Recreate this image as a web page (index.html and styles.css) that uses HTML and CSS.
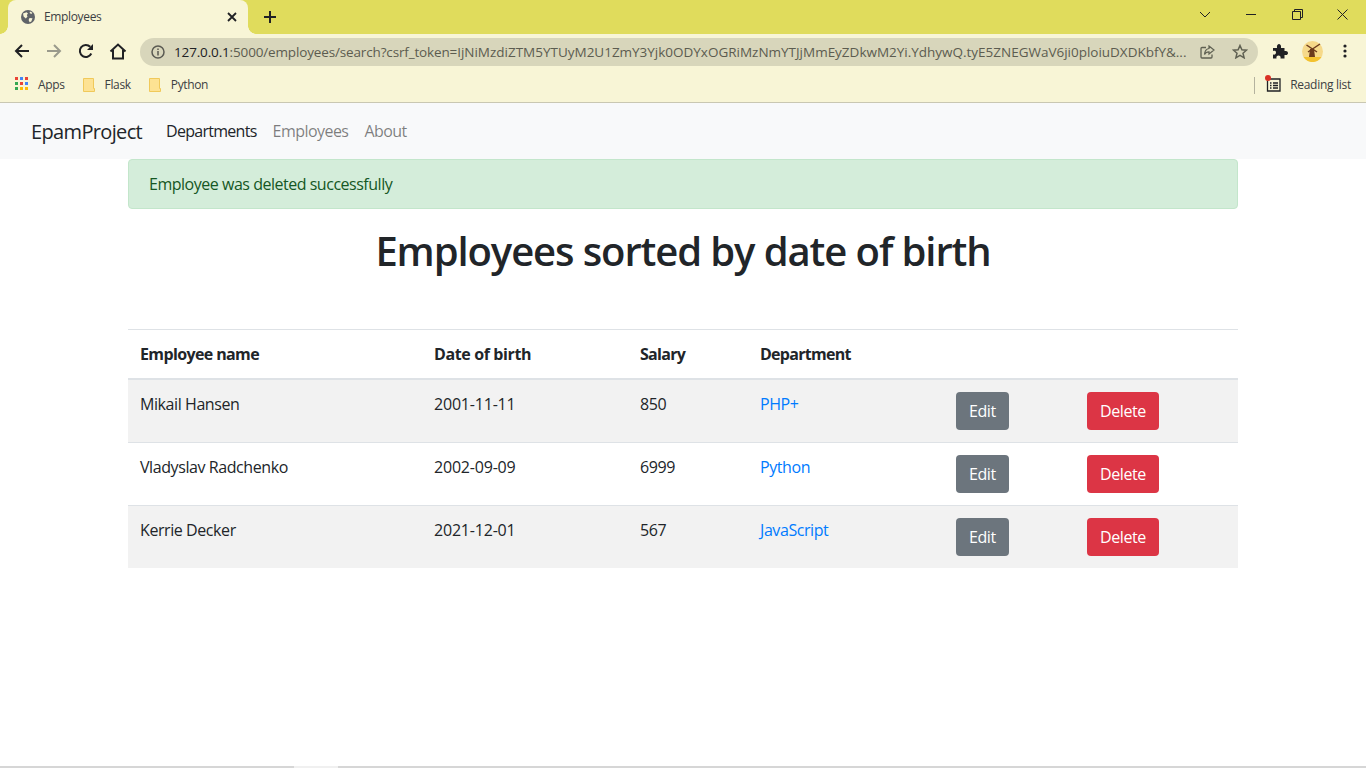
FILE: index.html
```html
<!DOCTYPE html>
<html lang="en">
<head>
<meta charset="utf-8">
<title>Employees</title>
<link rel="stylesheet" href="styles.css">
</head>
<body>
<div class="shell">
  <header class="browser">
    <div class="tabstrip">
      <div class="tab">
        <svg class="tab-globe" width="16" height="16" viewBox="0 0 16 16"><circle cx="8" cy="8" r="7" fill="#5f6368"/><path d="M3 4.500 6.500 3.200 8 4.500 6.800 6 7.500 7.500 5.800 9.500 3.600 7.500ZM9.500 9 12.500 9.200 11.300 12.600 9.600 13.300 8.600 11ZM10 2.500 12.500 3.800 11.300 5 9.600 4Z" fill="#f8f5d6"/></svg>
        <span class="tab-title">Employees</span>
        <svg class="tab-close" width="10" height="10" viewBox="0 0 10 10"><path d="M1 1 9 9M9 1 1 9" stroke="#202124" stroke-width="1.800" fill="none"/></svg>
      </div>
      <svg class="new-tab" width="12" height="12" viewBox="0 0 12 12"><path d="M6 0V12M0 6H12" stroke="#202124" stroke-width="2" fill="none"/></svg>
      <div class="window-controls">
        <svg class="ctl-chevron" width="12" height="7" viewBox="0 0 12 7"><path d="M1 1 6 6 11 1" stroke="#202124" fill="none"/></svg>
        <svg class="ctl-min" width="10" height="1" viewBox="0 0 10 1"><path d="M0 .5H10" stroke="#202124"/></svg>
        <svg class="ctl-max" width="11" height="11" viewBox="0 0 11 11"><path d="M.5 2.500H8.500V10.500H.5ZM2.500 2.500V.5H10.500V8.500H8.500" stroke="#202124" fill="none"/></svg>
        <svg class="ctl-close" width="11" height="11" viewBox="0 0 11 11"><path d="M.5 .5 10.500 10.500M10.500 .5 .5 10.500" stroke="#202124" fill="none"/></svg>
      </div>
    </div>
    <div class="toolbar">
      <svg class="nav-icon" width="16" height="16" viewBox="0 0 16 16"><path d="M15 8H2M8 2 2 8 8 14" stroke="#202124" stroke-width="2" fill="none"/></svg>
      <svg class="nav-icon nav-forward" width="16" height="16" viewBox="0 0 16 16"><path d="M1 8H14M8 2 14 8 8 14" stroke="#9a9a8c" stroke-width="2" fill="none"/></svg>
      <svg class="nav-icon nav-reload" width="16" height="16" viewBox="0 0 16 16"><path d="M13.300 10.500A6 6 0 1 1 12.200 3.800" stroke="#202124" stroke-width="2" fill="none"/><path d="M15 1V7H9Z" fill="#202124"/></svg>
      <svg class="nav-icon nav-home" width="18" height="17" viewBox="0 0 18 17"><path d="M1.500 8.500 9 1.500 16.500 8.500M4 7V15.500H14V7" stroke="#202124" stroke-width="2" fill="none"/></svg>
      <div class="omnibox">
        <svg class="info" width="14" height="14" viewBox="0 0 14 14"><circle cx="7" cy="7" r="6" stroke="#5a5a52" stroke-width="1.500" fill="none"/><path d="M7 6V10.500M7 3.500V5" stroke="#5a5a52" stroke-width="1.500"/></svg>
        <div class="url"><span class="url-host">127.0.0.1</span>:5000/employees/search?csrf_token=<span class="url-token">IjNiMzdiZTM5YTUyM2U1ZmY3Yjk0ODYxOGRiMzNmYTJjMmEyZDkwM2Yi.YdhywQ.tyE5ZNEGWaV6ji0ploiuDXDKbfY&amp;...</span></div>
        <svg class="omni-share" width="15" height="14" viewBox="0 0 15 14"><path d="M6 2.500H2A1 1 0 0 0 1 3.500V12A1 1 0 0 0 2 13H11A1 1 0 0 0 12 12V9.500" stroke="#5f6052" stroke-width="1.300" fill="none"/><path d="M9 1 14 5 9 9V6.800C7 6.800 5.500 7.500 4.500 9.500 4.700 6.500 6.500 4 9 3.500Z" stroke="#5f6052" stroke-width="1.200" fill="none"/></svg>
        <svg class="omni-star" width="16" height="15" viewBox="0 0 16 15"><path d="M8 1.500 9.900 5.800 14.500 6.200 11 9.300 12.100 13.800 8 11.400 3.900 13.800 5 9.300 1.500 6.200 6.100 5.800Z" stroke="#5f6052" stroke-width="1.500" fill="none"/></svg>
      </div>
      <svg class="puzzle" width="16" height="16" viewBox="0 0 16 16"><path d="M1 5H5C4.500 2 6 1 7 1S9.500 2 9 5H12.500V8C15.500 7.500 16 9 16 10S15.500 12.500 12.500 12V15.500H8.500C9 13.500 8 12.500 6.500 12.500S4 13.500 4.500 15.500H1V11.500C3 12 4 11 4 9.500S3 7.500 1 8Z" fill="#202124"/></svg>
      <svg class="avatar" width="21" height="21" viewBox="0 0 21 21"><circle cx="10.500" cy="10.500" r="10.500" fill="#f6d98a"/><path d="M1.500 16A10.500 10.500 0 0 0 19.500 16Z" fill="#f3c22f"/><path d="M8 8H12L13 16H7Z" fill="#6b3a1c"/><path d="M4.500 4 15 11M18 3 6 11" stroke="#6b3a1c" stroke-width="1.500"/></svg>
      <svg class="kebab" width="4" height="14" viewBox="0 0 4 14"><circle cx="2" cy="2" r="1.600" fill="#202124"/><circle cx="2" cy="7" r="1.600" fill="#202124"/><circle cx="2" cy="12" r="1.600" fill="#202124"/></svg>
    </div>
    <div class="bookmarks">
      <svg class="apps" width="14" height="14" viewBox="0 0 14 14">
        <rect width="3" height="3" fill="#ea4335"/><rect x="5" width="3" height="3" fill="#4285f4"/><rect x="10" width="3" height="3" fill="#ea4335"/>
        <rect y="5" width="3" height="3" fill="#34a853"/><rect x="5" y="5" width="3" height="3" fill="#ea4335"/><rect x="10" y="5" width="3" height="3" fill="#4285f4"/>
        <rect y="10" width="3" height="3" fill="#34a853"/><rect x="5" y="10" width="3" height="3" fill="#fbbc04"/><rect x="10" y="10" width="3" height="3" fill="#fbbc04"/>
      </svg>
      <span class="bm-label bm-apps">Apps</span>
      <svg class="folder" width="12" height="14" viewBox="0 0 12 14"><path d="M.5 .5H10.500V10.500H11.500V13.500H.5Z" fill="#fde293" stroke="#f0c95a"/></svg>
      <span class="bm-label bm-flask">Flask</span>
      <svg class="folder" width="12" height="14" viewBox="0 0 12 14"><path d="M.5 .5H10.500V10.500H11.500V13.500H.5Z" fill="#fde293" stroke="#f0c95a"/></svg>
      <span class="bm-label">Python</span>
      <div class="reading">
        <span class="reading-sep"></span>
        <span class="reading-icon">
          <svg width="15" height="14" viewBox="0 0 15 14"><path d="M1.500 2.500V13H14V1H1.500M4 5H5.500M7 5H12M4 7.500H5.500M7 7.500H12M4 10H5.500M7 10H12" stroke="#202124" stroke-width="1.300" fill="none"/></svg>
          <span class="reading-dot"></span>
        </span>
        <span class="bm-label bm-reading">Reading list</span>
      </div>
    </div>
  </header>
  <nav class="navbar">
    <a class="brand">EpamProject</a>
    <a class="nav-link nav-active">Departments</a>
    <a class="nav-link">Employees</a>
    <a class="nav-link">About</a>
  </nav>
  <main class="container">
    <div class="alert">Employee was deleted successfully</div>
    <h1 class="title">Employees sorted by date of birth</h1>
    <table class="table">
      <colgroup>
        <col class="c-name"><col class="c-dob"><col class="c-sal"><col class="c-dep"><col class="c-edit"><col class="c-del">
      </colgroup>
      <thead>
        <tr><th class="th-name">Employee name</th><th class="th-dob">Date of birth</th><th class="th-sal">Salary</th><th class="th-dep">Department</th><th></th><th></th></tr>
      </thead>
      <tbody>
        <tr class="striped"><td>Mikail Hansen</td><td class="date">2001-11-11</td><td>850</td><td><a class="link">PHP+</a></td><td><a class="btn btn-edit">Edit</a></td><td><a class="btn btn-del">Delete</a></td></tr>
        <tr><td>Vladyslav Radchenko</td><td class="date">2002-09-09</td><td>6999</td><td><a class="link">Python</a></td><td><a class="btn btn-edit">Edit</a></td><td><a class="btn btn-del">Delete</a></td></tr>
        <tr class="striped"><td>Kerrie Decker</td><td class="date">2021-12-01</td><td>567</td><td><a class="link">JavaScript</a></td><td><a class="btn btn-edit">Edit</a></td><td><a class="btn btn-del">Delete</a></td></tr>
      </tbody>
    </table>
  </main>
  <div class="scrollbar"><span class="scroll-thumb"></span></div>
</div>
</body>
</html>
```
FILE: styles.css
```css
* { box-sizing: border-box; }
html, body { margin: 0; padding: 0; height: 100%; overflow: hidden; background: #fff; }
body { font-family: "Open Sans", "Noto Sans", "Liberation Sans", sans-serif; color: #212529; }
svg { display: block; flex: none; }
.shell { height: 768px; display: flex; flex-direction: column; }

/* Browser chrome */
.browser { height: 103px; flex: none; background: #f8f5d6; border-bottom: 1px solid #c9c7b2; display: flex; flex-direction: column; }
.tabstrip { height: 34px; background: #e0dc5c; display: flex; align-items: center; padding-left: 8px; }
.tab { width: 240px; height: 34px; background: #f8f5d6; border-radius: 8px 8px 0 0; display: flex; align-items: center; padding-left: 12px; position: relative; }
.tab::before, .tab::after { content: ""; position: absolute; bottom: 0; width: 8px; height: 8px; }
.tab::before { left: -8px; background: radial-gradient(circle at 0 0, #e0dc5c 7.500px, #f8f5d6 8px); }
.tab::after { right: -8px; background: radial-gradient(circle at 100% 0, #e0dc5c 7.500px, #f8f5d6 8px); }
.tab-globe { margin-top: -1px; }
.tab-title { font-size: 12px; margin-left: 8px; margin-top: -2px; letter-spacing: -.35px; color: #3c4043; flex: 1; }
.tab-close { margin-right: 11px; }
.new-tab { margin-left: 16px; }
.window-controls { margin-left: auto; display: flex; align-items: center; }
.ctl-chevron { margin-right: 35px; margin-top: -6px; }
.ctl-min { margin-right: 36px; margin-top: -6px; }
.ctl-max { margin-right: 34px; margin-top: -6px; }
.ctl-close { margin-right: 18px; margin-top: -6px; }

.toolbar { height: 34px; display: flex; align-items: center; padding-left: 14px; }
.nav-forward { margin-left: 16px; }
.nav-reload { margin-left: 16px; }
.nav-home { margin-left: 15px; }
.omnibox { width: 1118px; height: 28px; margin-left: 13px; background: #d8d6bb; border-radius: 14px; display: flex; align-items: center; padding-left: 11px; margin-top: 1px; }
.info { margin-right: 9px; }
.url { font-size: 13.500px; letter-spacing: -.15px; color: #5c5c50; width: 1018px; white-space: nowrap; overflow: hidden; }
.url-host { color: #202124; }
.url-token { letter-spacing: -.01px; }
.omni-share { margin-left: 8px; }
.omni-star { margin-left: 17px; }
.puzzle { margin-left: 14px; }
.avatar { margin-left: 14px; }
.kebab { margin-left: 20px; }

.bookmarks { height: 34px; display: flex; align-items: center; padding-left: 15px; }
.bm-label { font-size: 12px; letter-spacing: -.35px; color: #3c4043; white-space: nowrap; margin-top: -2px; }
.bm-reading { letter-spacing: -.28px; }
.apps { margin-right: 9px; margin-top: -2px; }
.bm-apps { margin-right: 18px; }
.folder { margin-right: 10px; margin-top: -1px; }
.bm-flask { margin-right: 18px; }
.reading { margin-left: auto; margin-right: 15px; display: flex; align-items: center; }
.reading-sep { width: 1px; height: 17px; background: #b4b29e; margin-right: 11px; }
.reading-icon { position: relative; margin-right: 9px; display: block; margin-top: -1px; }
.reading-dot { position: absolute; left: -1px; top: -3px; width: 6px; height: 6px; border-radius: 50%; background: #d93025; }

/* Page nav */
.navbar { height: 56px; flex: none; background: #f8f9fa; display: flex; align-items: center; padding-left: 31px; }
.brand { font-size: 20px; color: #212529; margin-right: 16px; letter-spacing: -.65px; }
.nav-link { font-size: 16px; color: rgba(0,0,0,.5); padding: 0 8px; letter-spacing: -.55px; }
.nav-active { color: #212529; letter-spacing: -.72px; }

/* Content */
.container { flex: 1; width: 1110px; margin-left: 128px; }
.alert { height: 50px; background: #d4edda; border: 1px solid #c3e6cb; border-radius: 4px; color: #155724; font-size: 16px; padding: 0 20px; display: flex; align-items: center; letter-spacing: -.48px; }
.title { font-size: 40px; font-weight: 600; line-height: 48px; text-align: center; margin: 18px 0 54px; letter-spacing: -1.100px; color: #212529; }
.table { width: 100%; border-collapse: collapse; table-layout: fixed; font-size: 16px; letter-spacing: -.42px; }
.c-name { width: 294px; } .c-dob { width: 206px; } .c-sal { width: 120px; } .c-dep { width: 196px; } .c-edit { width: 131px; } .c-del { width: 163px; }
.table th { text-align: left; font-weight: 700; padding: 12px; line-height: 24px; border-top: 1px solid #dee2e6; border-bottom: 2px solid #dee2e6; }
.table .th-name { letter-spacing: -.62px; }
.table .th-dob { letter-spacing: -.38px; }
.table .th-sal { letter-spacing: -.7px; }
.table .th-dep { letter-spacing: -.72px; }
.table td { padding: 12px; line-height: 24px; vertical-align: top; border-top: 1px solid #dee2e6; height: 63px; }
.table tbody tr:first-child td { border-top: none; height: 62px; }
.table tbody tr:last-child td { height: 62px; }
.table td.date { letter-spacing: -.2px; }
.striped { background: #f2f2f2; }
.link { color: #007bff; }
.btn { display: inline-block; height: 38px; line-height: 38px; padding: 0 13px; border-radius: 4px; color: #fff; }
.btn-edit { background: #6c757d; }
.btn-del { background: #dc3545; letter-spacing: -.4px; }

.scrollbar { height: 2px; flex: none; background: #d6d6d6; display: flex; padding-left: 294px; }
.scroll-thumb { width: 44px; background: #f0f0f0; }
```
